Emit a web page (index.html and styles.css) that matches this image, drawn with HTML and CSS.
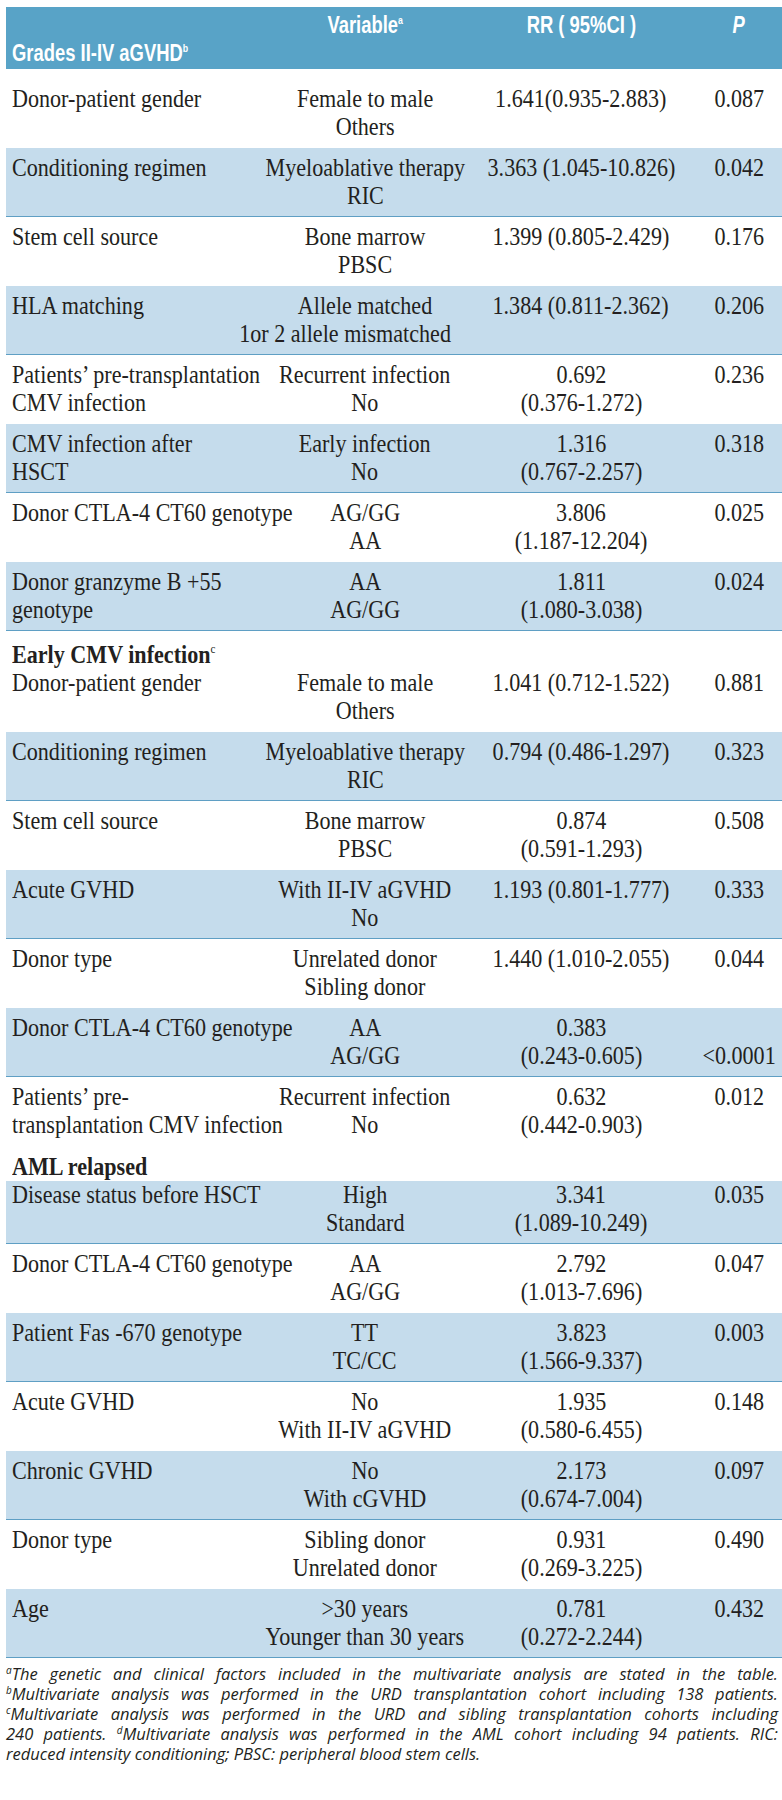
FILE: index.html
```html
<!DOCTYPE html>
<html lang="en">
<head>
<meta charset="utf-8">
<title>Multivariate analysis</title>
<link rel="stylesheet" href="styles.css">
</head>
<body>
<div class="page">
<table class="tbl">
  <colgroup>
    <col class="c1"><col class="c2"><col class="c3"><col class="c4">
  </colgroup>
  <thead>
    <tr class="hdr">
      <th class="h1"><span class="cond left">Grades II-IV aGVHD<sup>b</sup></span></th>
      <th class="h2"><span class="cond">Variable<sup>a</sup></span></th>
      <th class="h2"><span class="cond">RR ( 95%CI )</span></th>
      <th class="h2 hp"><span class="cond">P</span></th>
    </tr>
  </thead>
  <tbody>
    <tr class="row first"><td><span class="t">Donor-patient gender</span></td><td><span class="t">Female to male<br>Others</span></td><td><span class="t">1.641(0.935-2.883)</span></td><td><span class="t">0.087</span></td></tr>
    <tr class="row alt"><td><span class="t">Conditioning regimen</span></td><td><span class="t">Myeloablative therapy<br>RIC</span></td><td><span class="t">3.363 (1.045-10.826)</span></td><td><span class="t">0.042</span></td></tr>
    <tr class="row"><td><span class="t">Stem cell source</span></td><td><span class="t">Bone marrow<br>PBSC</span></td><td><span class="t">1.399 (0.805-2.429)</span></td><td><span class="t">0.176</span></td></tr>
    <tr class="row alt"><td><span class="t">HLA matching</span></td><td><span class="t">Allele matched<br><span class="nudge">1or 2 allele mismatched</span></span></td><td><span class="t">1.384 (0.811-2.362)</span></td><td><span class="t">0.206</span></td></tr>
    <tr class="row"><td><span class="t">Patients’ pre-transplantation<br>CMV infection</span></td><td><span class="t">Recurrent infection<br>No</span></td><td><span class="t">0.692<br>(0.376-1.272)</span></td><td><span class="t">0.236</span></td></tr>
    <tr class="row alt"><td><span class="t">CMV infection after<br>HSCT</span></td><td><span class="t">Early infection<br>No</span></td><td><span class="t">1.316<br>(0.767-2.257)</span></td><td><span class="t">0.318</span></td></tr>
    <tr class="row"><td><span class="t">Donor CTLA-4 CT60 genotype</span></td><td><span class="t">AG/GG<br>AA</span></td><td><span class="t">3.806<br>(1.187-12.204)</span></td><td><span class="t">0.025</span></td></tr>
    <tr class="row alt"><td><span class="t">Donor granzyme B +55<br>genotype</span></td><td><span class="t">AA<br>AG/GG</span></td><td><span class="t">1.811<br>(1.080-3.038)</span></td><td><span class="t">0.024</span></td></tr>

    <tr class="sect sect-cmv"><td colspan="4"><span class="t">Early CMV infection<sup>c</sup></span></td></tr>
    <tr class="row after-sect"><td><span class="t">Donor-patient gender</span></td><td><span class="t">Female to male<br>Others</span></td><td><span class="t">1.041 (0.712-1.522)</span></td><td><span class="t">0.881</span></td></tr>
    <tr class="row alt"><td><span class="t">Conditioning regimen</span></td><td><span class="t">Myeloablative therapy<br>RIC</span></td><td><span class="t">0.794 (0.486-1.297)</span></td><td><span class="t">0.323</span></td></tr>
    <tr class="row"><td><span class="t">Stem cell source</span></td><td><span class="t">Bone marrow<br>PBSC</span></td><td><span class="t">0.874<br>(0.591-1.293)</span></td><td><span class="t">0.508</span></td></tr>
    <tr class="row alt"><td><span class="t">Acute GVHD</span></td><td><span class="t">With II-IV aGVHD<br>No</span></td><td><span class="t">1.193 (0.801-1.777)</span></td><td><span class="t">0.333</span></td></tr>
    <tr class="row"><td><span class="t">Donor type</span></td><td><span class="t">Unrelated donor<br>Sibling donor</span></td><td><span class="t">1.440 (1.010-2.055)</span></td><td><span class="t">0.044</span></td></tr>
    <tr class="row alt"><td><span class="t">Donor CTLA-4 CT60 genotype</span></td><td><span class="t">AA<br>AG/GG</span></td><td><span class="t">0.383<br>(0.243-0.605)</span></td><td><span class="t"><br>&lt;0.0001</span></td></tr>
    <tr class="row"><td><span class="t">Patients’ pre-<br>transplantation CMV infection</span></td><td><span class="t">Recurrent infection<br>No</span></td><td><span class="t">0.632<br>(0.442-0.903)</span></td><td><span class="t">0.012</span></td></tr>

    <tr class="sect sect-aml"><td colspan="4"><span class="t">AML relapsed</span></td></tr>
    <tr class="row alt after-sect"><td><span class="t">Disease status before HSCT</span></td><td><span class="t">High<br>Standard</span></td><td><span class="t">3.341<br>(1.089-10.249)</span></td><td><span class="t">0.035</span></td></tr>
    <tr class="row"><td><span class="t">Donor CTLA-4 CT60 genotype</span></td><td><span class="t">AA<br>AG/GG</span></td><td><span class="t">2.792<br>(1.013-7.696)</span></td><td><span class="t">0.047</span></td></tr>
    <tr class="row alt"><td><span class="t">Patient Fas -670 genotype</span></td><td><span class="t">TT<br>TC/CC</span></td><td><span class="t">3.823<br>(1.566-9.337)</span></td><td><span class="t">0.003</span></td></tr>
    <tr class="row"><td><span class="t">Acute GVHD</span></td><td><span class="t">No<br>With II-IV aGVHD</span></td><td><span class="t">1.935<br>(0.580-6.455)</span></td><td><span class="t">0.148</span></td></tr>
    <tr class="row alt"><td><span class="t">Chronic GVHD</span></td><td><span class="t">No<br>With cGVHD</span></td><td><span class="t">2.173<br>(0.674-7.004)</span></td><td><span class="t">0.097</span></td></tr>
    <tr class="row"><td><span class="t">Donor type</span></td><td><span class="t">Sibling donor<br>Unrelated donor</span></td><td><span class="t">0.931<br>(0.269-3.225)</span></td><td><span class="t">0.490</span></td></tr>
    <tr class="row alt"><td><span class="t">Age</span></td><td><span class="t">&gt;30 years<br>Younger than 30 years</span></td><td><span class="t">0.781<br>(0.272-2.244)</span></td><td><span class="t">0.432</span></td></tr>
  </tbody>
</table>

<div class="notes">
  <p class="ln"><sup>a</sup>The genetic and clinical factors included in the multivariate analysis are stated in the table.</p>
  <p class="ln"><sup>b</sup>Multivariate analysis was performed in the URD transplantation cohort including 138 patients.</p>
  <p class="ln"><sup>c</sup>Multivariate analysis was performed in the URD and sibling transplantation cohorts including</p>
  <p class="ln">240 patients. <sup>d</sup>Multivariate analysis was performed in the AML cohort including 94 patients. RIC:</p>
  <p class="ln last">reduced intensity conditioning; PBSC: peripheral blood stem cells.</p>
</div>
</div>
</body>
</html>
```

FILE: styles.css
```css
html, body {
  margin: 0;
  padding: 0;
  background: #ffffff;
}

.page {
  padding: 7px 0 0 6px;
  color: #231f20;
  font-family: "Liberation Serif", "Times New Roman", serif;
}

.tbl {
  width: 776px;
  border-collapse: collapse;
  table-layout: fixed;
}

.c1 { width: 258px; }
.c2 { width: 202px; }
.c3 { width: 230px; }
.c4 { width: 86px; }

/* header */
.hdr th {
  background: #58a3c7;
  color: #ffffff;
  font-family: "Liberation Sans", Arial, sans-serif;
  font-weight: 700;
  font-size: 23px;
  line-height: 28px;
  white-space: nowrap;
  padding: 4px 0 2px;
}
.cond {
  display: inline-block;
  transform: scaleX(0.8);
  transform-origin: 50% 50%;
}
.cond.left { transform-origin: 0 50%; }
.hdr .h1 {
  text-align: left;
  vertical-align: bottom;
  padding-left: 6px;
}
.hdr .h2 {
  text-align: center;
  vertical-align: top;
  height: 56px;
}
.hdr .hp { font-style: italic; }
.hdr sup {
  font-size: 11px;
  line-height: 0;
  vertical-align: 9px;
}

/* condensed serif text: taller glyphs squeezed horizontally */
.t {
  display: inline-block;
  vertical-align: top;
  transform: scaleX(0.85);
  transform-origin: 50% 0;
}

/* body rows */
.row td {
  font-size: 26px;
  line-height: 28px;
  white-space: nowrap;
  vertical-align: top;
  text-align: center;
  padding: 6px 0 7px;
}
/* centred cells: negative side margins keep wide content centred on the column */
.row td .t { margin: 0 -50px; }
.row td:first-child {
  text-align: left;
  padding-left: 6px;
}
.row td:first-child .t {
  margin: 0;
  transform-origin: 0 0;
}
.row.alt td {
  background: #c5dcec;
  border-bottom: 1px solid #5f9fc4;
  padding-bottom: 6px;
}
.row.first td { padding-top: 16px; }

.nudge {
  display: inline-block;
  margin-right: 47px;
}

/* section labels */
.sect td {
  font-weight: 700;
  font-size: 26px;
  line-height: 28px;
  padding: 2px 0 0 6px;
  white-space: nowrap;
}
.sect .t { transform-origin: 0 0; }
.sect-cmv td { padding-top: 10px; }
.sect-aml td { padding-top: 7px; }
.sect sup {
  font-size: 13px;
  line-height: 0;
  vertical-align: 10px;
  font-weight: 400;
}
.row.after-sect td { padding-top: 0; }

/* footnotes */
.notes {
  width: 772px;
  margin-top: 6px;
  font-family: "Open Sans", "DejaVu Sans", sans-serif;
  font-style: italic;
  font-size: 16.5px;
  line-height: 20px;
  color: #231f20;
}
.ln {
  margin: 0;
  text-align: justify;
  text-align-last: justify;
}
.ln.last { text-align-last: left; }
.notes sup {
  font-size: 10px;
  line-height: 0;
  vertical-align: 6px;
}
```
